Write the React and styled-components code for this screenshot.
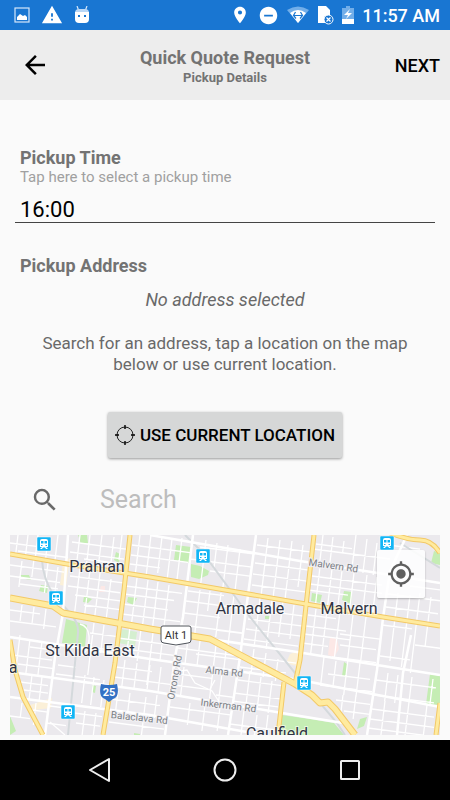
import { useState } from 'react'
import styled, { createGlobalStyle } from 'styled-components'
import {
  MdArrowBack,
  MdMyLocation,
  MdPlace,
  MdRemoveCircle,
  MdSearch,
  MdWarning,
} from 'react-icons/md'

// Side streets of the map: [x, y, end x] and [x, y, end y], the grid is tilted
const crossStreets = [
  [0, 8, 38], [8, 16, 58], [0, 30, 54], [0, 41, 50], [10, 49, 48], [0, 75, 30],
  [0, 86, 46], [20, 112, 44], [2, 120, 42], [8, 129, 44], [10, 147, 38],
  [14, 155, 38], [22, 175, 38], [0, 181, 20], [62, 7, 116], [60, 17, 114],
  [74, 24, 116], [60, 41, 113], [58, 51, 110], [65, 60, 112], [74, 70, 110],
  [80, 98, 106], [78, 112, 104], [48, 130, 66], [46, 139, 90], [72, 147, 102],
  [40, 171, 60], [64, 178, 92], [36, 188, 56], [66, 188, 90], [122, 10, 180],
  [121, 20, 178], [120, 29, 150], [116, 51, 172], [114, 59, 164], [113, 69, 158],
  [112, 79, 170], [108, 103, 166], [107, 113, 164], [106, 132, 142],
  [104, 142, 160], [101, 164, 150], [99, 187, 154], [180, 24, 242],
  [190, 12, 243], [200, 36, 240], [178, 56, 214], [176, 66, 236],
  [174, 78, 210], [172, 90, 234], [206, 95, 232], [168, 113, 226],
  [186, 119, 230], [168, 139, 202], [164, 150, 198], [160, 172, 222],
  [206, 160, 224], [247, 10, 300], [245, 28, 299], [243, 39, 297],
  [242, 50, 297], [240, 74, 294], [238, 84, 293], [236, 94, 291],
  [234, 104, 288], [231, 121, 286], [230, 132, 276], [228, 145, 272],
  [224, 158, 270], [222, 166, 268], [220, 189, 266], [306, 9, 342],
  [303, 14, 380], [302, 41, 372], [300, 49, 372], [298, 55, 338],
  [298, 80, 326], [296, 91, 336], [294, 99, 340], [292, 108, 318],
  [330, 99, 370], [330, 110, 366], [322, 122, 366], [318, 139, 360],
  [310, 150, 362], [326, 165, 360], [334, 176, 360], [366, 145, 426],
  [364, 160, 424], [362, 174, 424], [360, 184, 424], [358, 193, 422],
  [378, 59, 430], [376, 72, 428], [372, 90, 402], [370, 121, 400],
  [400, 51, 430], [405, 110, 430], [378, 10, 410],
]

const sideStreets = [
  [8, 0, 18], [18, 0, 20], [28, 0, 22], [38, 4, 24], [48, 0, 26], [12, 26, 52],
  [24, 24, 42], [38, 28, 58], [48, 32, 66], [12, 70, 86], [24, 72, 88],
  [36, 74, 94], [10, 100, 136], [20, 104, 138], [32, 106, 140], [22, 140, 164],
  [32, 142, 166], [12, 168, 182], [26, 168, 190], [70, 0, 28], [80, 0, 32],
  [92, 0, 32], [104, 2, 35], [112, 0, 25], [70, 33, 78], [80, 35, 80],
  [90, 38, 82], [101, 44, 84], [84, 88, 140], [94, 90, 118], [75, 140, 168],
  [84, 142, 170], [94, 145, 172], [75, 176, 200], [86, 178, 200],
  [130, 0, 38], [141, 0, 40], [152, 2, 38], [162, 4, 44], [172, 3, 45],
  [127, 43, 90], [138, 45, 92], [148, 47, 92], [159, 50, 94], [120, 92, 122],
  [131, 94, 126], [143, 98, 150], [153, 100, 126], [115, 125, 152],
  [127, 128, 154], [140, 130, 154], [151, 132, 158], [108, 156, 176],
  [120, 158, 178], [136, 162, 200], [147, 160, 183], [196, 5, 48],
  [207, 8, 34], [218, 10, 54], [230, 14, 56], [190, 55, 98], [200, 56, 76],
  [211, 58, 102], [224, 60, 114], [178, 104, 128], [190, 106, 130],
  [206, 110, 166], [216, 116, 140], [174, 132, 160], [212, 138, 174],
  [180, 168, 190], [195, 170, 196], [210, 172, 196], [258, 3, 60],
  [270, 5, 62], [282, 6, 64], [293, 10, 52], [250, 63, 112], [262, 65, 114],
  [273, 66, 102], [284, 70, 104], [244, 114, 138], [256, 118, 142],
  [268, 124, 146], [240, 136, 172], [251, 142, 175], [262, 146, 178],
  [234, 175, 200], [247, 180, 200], [258, 180, 198], [313, 0, 26],
  [323, 2, 30], [334, 6, 18], [346, 0, 34], [357, 4, 38], [367, 8, 40],
  [310, 32, 72], [322, 34, 74], [332, 36, 76], [344, 38, 80], [357, 40, 80],
  [367, 42, 82], [306, 74, 118], [317, 76, 120], [330, 76, 124],
  [343, 80, 124], [356, 82, 128], [314, 122, 150], [326, 126, 152],
  [338, 124, 160], [350, 128, 162], [333, 160, 182], [346, 160, 184],
  [388, 58, 126], [400, 60, 132], [410, 58, 138], [421, 62, 112],
  [378, 138, 166], [388, 140, 168], [402, 142, 200], [423, 144, 170],
  [375, 166, 200], [417, 170, 200],
]

const sidePath = [
  ...crossStreets.map(([x, y, end]) => `M${x} ${y}L${end} ${y + (end - x) * 0.13}`),
  ...sideStreets.map(([x, y, end]) => `M${x} ${y}L${x - (end - y) * 0.12} ${end}`),
].join('')

const streets = `M58 0L53 78L45 122L35 200M0 162L140 180L237 197
  M0 137L140 156L290 181L333 188M0 102L140 124L197 132L290 145L430 172
  M140 0L290 26L368 38L430 48M183 0L173 82L165 122L155 200
  M246 0L238 60L230 122L218 200M200 104L287 117L367 130L430 140
  M397 0L380 36L373 83L367 135L357 200M401 100L393 138L387 200`

const mainRoads = [
  'M0 19L57 29L140 42L290 68L373 82L430 91',
  'M120 0L114 55L105 128L93 200',
  'M0 105L5 135L13 162L33 200',
  'M304 0L297 62L290 125L285 149',
  'M274 147L268 200',
  'M380 -2Q398 5 410 5T430 18',
  'M430 168L426 200',
  'M0 63L43 71L53 78L140 94L200 104L285 149L302 160L310 168L318 167L325 174L345 200',
]

const stations = [[34, 9], [46, 63], [58, 177], [193, 21], [294, 148], [377, 8]]

const places = [
  { name: 'Prahran', x: 87, y: 37 },
  { name: 'Armadale', x: 240, y: 79 },
  { name: 'Malvern', x: 339, y: 79 },
  { name: 'St Kilda East', x: 80, y: 121 },
  { name: 'a', x: 3, y: 138 },
  { name: 'Caulfield', x: 267, y: 204 },
]

const roadNames = [
  { name: 'Malvern Rd', x: 323, y: 34, angle: 8 },
  { name: 'Alma Rd', x: 214, y: 140, angle: 6 },
  { name: 'Inkerman Rd', x: 218, y: 174, angle: 7 },
  { name: 'Balaclava Rd', x: 129, y: 186, angle: 6 },
  { name: 'Orrong Rd', x: 168, y: 143, angle: -80 },
]

const ImageIcon = () => (
  <svg width='16' height='16' viewBox='0 0 16 16' aria-hidden='true'>
    <rect x='1' y='1' width='14' height='14' fill='none' stroke='#d5e7fa' strokeWidth='1.2' />
    <path d='M3 13V10L6 7L9 9L11 8L13 10V13Z' fill='#fff' />
  </svg>
)

const DroidIcon = () => (
  <svg width='16' height='18' viewBox='0 0 16 18' aria-hidden='true'>
    <path d='M3 0L4.500 4M13 0L11.500 4' stroke='#d5e7fa' strokeWidth='1.2' />
    <path d='M1 7Q1 3 5 3H11Q15 3 15 7Z' fill='#b9d7f6' />
    <path d='M1 6H15V13Q15 17 11 17H5Q1 17 1 13Z' fill='#fff' />
    <path d='M4 9H6V11H4ZM10 9H12V11H10Z' fill='#1976d2' />
  </svg>
)

const WifiIcon = () => (
  <svg width='22' height='18' viewBox='0 0 22 18' aria-hidden='true'>
    <path d='M0 4Q11 -3 22 4L11 17Z' fill='#72aee9' />
    <path d='M3 7Q11 1 19 7L11 17Z' fill='#fff' />
    <path
      d='M6 9.500H16M8.500 6L6.500 9.500L9 12.500M13.500 6L15.500 9.500L13 12.500'
      fill='none'
      stroke='#1976d2'
      strokeWidth='1.2'
    />
  </svg>
)

const NoSimIcon = () => (
  <svg width='17' height='20' viewBox='0 0 17 20' aria-hidden='true'>
    <path d='M1 1H9L13 5V18H1Z' fill='#fff' />
    <circle cx='11.5' cy='14.5' r='4.5' fill='#1976d2' stroke='#fff' />
    <path d='M9.500 12.500L13.500 16.500M13.500 12.500L9.500 16.500' stroke='#fff' strokeWidth='1.2' />
  </svg>
)

const BatteryIcon = () => (
  <svg width='12' height='18' viewBox='0 0 12 18' aria-hidden='true'>
    <path d='M0 2H4V0H8V2H12V13H0Z' fill='#72aee9' />
    <path d='M0 13H12V18H0Z' fill='#fff' />
    <path d='M8 3L2 9H6L4 13L10 7H6Z' fill='#fff' />
  </svg>
)

const CrosshairIcon = () => (
  <svg width='20' height='20' viewBox='0 0 20 20' aria-hidden='true'>
    <circle cx='10' cy='10' r='8' fill='none' stroke='#222' />
    <path d='M10 0V4M10 16V20M0 10H4M16 10H20' stroke='#000' strokeWidth='1.4' />
  </svg>
)

const StreetMap = () => (
  <MapDrawing viewBox='0 0 430 200' preserveAspectRatio='xMidYMid slice' role='img' aria-label='Map'>
    <rect width='430' height='200' fill='#ebe9ed' />
    <g fill='#c5edb4'>
      <path d='M56 84L77 90L75 112L66 109L52 108Z' />
      <path d='M166 10L181 12L180 28L164 25Z' />
      <path d='M181 29L190 31L199 36L198 40L189 44L181 42Z' />
      <path d='M68 0H77L78 8L71 9ZM106 17L110 19L109 28L104 25Z' />
      <path d='M10 40L19 40L21 45L10 43ZM31 50L38 51L37 58L29 56Z' />
      <path d='M74 61L82 64L78 68L73 67ZM118 62L127 63L123 70L117 67Z' />
      <path d='M82 150L86 151L85 158L82 157ZM255 81H260V84H255Z' />
      <path d='M272 180L300 184L324 188L334 200H268Z' />
      <path d='M302 58L312 60L310 68L301 66ZM334 56L342 57L341 69L332 65Z' />
      <path d='M420 139L430 141V170L416 169ZM424 16L430 18V30L421 28Z' />
      <path d='M334 127L337 129L336 142L332 141ZM350 184L357 182L354 191L347 194Z' />
      <path d='M0 181L6 196L0 200ZM124 198L130 199V200H124Z' />
    </g>
    <path d='M112 94L127 97L125 111L108 108Z' fill='#d5efd0' />
    <path d='M320 102L327 104L329 114L324 122L318 120Z M91 51H95V57H89Z' fill='#fce8e6' />
    <path d='M53 27L60 23L56 51L50 50ZM20 170L42 163L41 173L24 175ZM280 119L290 115V132L276 128Z' fill='#fbf0d8' />
    <path d={sidePath} fill='none' stroke='#fff' strokeWidth='1.3' />
    <path
      d='M163 126L171 136L177 135L185 148L202 156L210 168M205 145L200 154M40 187L55 200M70 89Q78 91 79 101Q80 114 72 120'
      fill='none'
      stroke='#fff'
      strokeWidth='1.3'
    />
    <path
      d='M175 0L193 18L240 82L285 138L327 188L335 200M32 25Q33 43 43 59L60 78Q69 88 68 98L65 128L58 200M390 8L430 33'
      fill='none'
      stroke='#d4d9dc'
      strokeWidth='2'
    />
    <path d={streets} fill='none' stroke='#fff' strokeWidth='2.5' />
    <g fill='none' strokeLinejoin='round'>
      {mainRoads.map((road, i) => (
        <path key={road} d={road} stroke='#f3c967' strokeWidth={i === 7 ? 7 : 5} />
      ))}
      {mainRoads.map((road, i) => (
        <path key={road} d={road} stroke='#ffeb9f' strokeWidth={i === 7 ? 5 : 3} />
      ))}
    </g>
    {stations.map(([x, y]) => (
      <g key={`${x}-${y}`} transform={`translate(${x - 7} ${y - 7})`}>
        <rect width='14' height='14' rx='1' fill='#12b5f5' stroke='#fff' strokeWidth='.5' />
        <path d='M3 4Q3 2 5 2H9Q11 2 11 4V10H9L11 12H9L8 10.500H6L5 12H3L5 10H3Z' fill='#fff' />
        <path d='M4 4H6.500V6.500H4ZM7.500 4H10V6.500H7.500ZM4 8H5.500V9H4ZM8.500 8H10V9H8.500Z' fill='#12b5f5' />
      </g>
    ))}
    <path d='M153 91H179Q181 91 181 93V105Q181 108 178 108L166 110L154 108Q151 108 151 105V93Q151 91 153 91Z' fill='#fff' stroke='#50545b' />
    <ShieldName x='166' y='104'>Alt 1</ShieldName>
    <path d='M91 149Q99 151 107 149Q110 162 103 164L99 167L95 164Q88 162 91 149Z' fill='#3371c5' />
    <ShieldName x='99' y='161' $light>25</ShieldName>
    {places.map(({ name, x, y }) => (
      <PlaceName key={name} x={x} y={y}>{name}</PlaceName>
    ))}
    {roadNames.map(({ name, x, y, angle }) => (
      <RoadName key={name} x={x} y={y} transform={`rotate(${angle} ${x} ${y})`}>{name}</RoadName>
    ))}
  </MapDrawing>
)

export default function App() {
  const [time, setTime] = useState('16:00')
  const [query, setQuery] = useState('')

  return (
    <Screen>
      <GlobalStyle />
      <StatusBar>
        <Notifications>
          <ImageIcon />
          <MdWarning size={22} />
          <DroidIcon />
        </Notifications>
        <SystemStatus>
          <MdPlace size={20} />
          <MdRemoveCircle size={21} />
          <WifiIcon />
          <NoSimIcon />
          <BatteryIcon />
          <Clock>11:57 AM</Clock>
        </SystemStatus>
      </StatusBar>

      <Header>
        <BackButton type='button' aria-label='Back'>
          <MdArrowBack size={30} />
        </BackButton>
        <Heading>
          <h1>Quick Quote Request</h1>
          <p>Pickup Details</p>
        </Heading>
        <NextButton type='button'>NEXT</NextButton>
      </Header>

      <Main>
        <Field>
          <FieldLabel htmlFor='pickup-time'>Pickup Time</FieldLabel>
          <Hint id='time-hint'>Tap here to select a pickup time</Hint>
          <TimeInput
            id='pickup-time'
            aria-describedby='time-hint'
            value={time}
            onChange={(e) => setTime(e.target.value)}
          />
        </Field>

        <Address>
          <SectionTitle>Pickup Address</SectionTitle>
          <Selected>No address selected</Selected>
          <Help>
            Search for an address, tap a location on the map below or use
            current location.
          </Help>
          <LocationButton type='button'>
            <CrosshairIcon />
            USE CURRENT LOCATION
          </LocationButton>
        </Address>

        <SearchRow>
          <MdSearch size={30} />
          <SearchInput
            type='search'
            aria-label='Search'
            placeholder='Search'
            value={query}
            onChange={(e) => setQuery(e.target.value)}
          />
        </SearchRow>

        <MapFrame>
          <StreetMap />
          <LocateButton type='button' aria-label='My location'>
            <MdMyLocation size={28} />
          </LocateButton>
        </MapFrame>
      </Main>

      <NavBar>
        <NavButton type='button' aria-label='Back'>
          <svg width='24' height='26' viewBox='0 0 24 26'>
            <path d='M21 2V24L2 13Z' />
          </svg>
        </NavButton>
        <NavButton type='button' aria-label='Home'>
          <svg width='26' height='26' viewBox='0 0 26 26'>
            <circle cx='13' cy='13' r='10.5' />
          </svg>
        </NavButton>
        <NavButton type='button' aria-label='Recent apps'>
          <svg width='24' height='24' viewBox='0 0 24 24'>
            <rect x='3' y='3' width='18' height='18' rx='.5' />
          </svg>
        </NavButton>
      </NavBar>
    </Screen>
  )
}

const GlobalStyle = createGlobalStyle`
  * {
    box-sizing: border-box;
  }

  body {
    margin: 0;
    background: #fafafa;
    color: #000;
    font-family: Roboto, sans-serif;
  }

  h1, h2, p {
    margin: 0;
  }

  button, input {
    border: 0;
    padding: 0;
    background: none;
    color: inherit;
    font-family: inherit;
  }

  svg {
    flex-shrink: 0;
  }
`

const Screen = styled.div`
  display: flex;
  flex-direction: column;
  min-height: 100vh;
`

const StatusBar = styled.div`
  display: flex;
  align-items: center;
  justify-content: space-between;
  height: 30px;
  padding: 0 10px 0 14px;
  background: #1976d2;
  color: #fff;
`

const Notifications = styled.div`
  display: flex;
  align-items: center;
  gap: 11px;
`

const SystemStatus = styled.div`
  display: flex;
  align-items: center;
  gap: 8px;
`

const Clock = styled.span`
  font-size: 18px;
  font-weight: 500;
`

const Header = styled.header`
  display: grid;
  grid-template-columns: 1fr auto 1fr;
  align-items: center;
  height: 70px;
  padding: 0 10px;
  background: #ededed;
`

const BackButton = styled.button`
  display: flex;
  justify-self: start;
  padding: 10px;
`

const Heading = styled.div`
  padding-top: 3px;
  color: #737373;
  text-align: center;

  h1 {
    font-size: 18px;
    line-height: 22px;
  }

  p {
    font-size: 13px;
    font-weight: 700;
    line-height: 18px;
  }
`

const NextButton = styled.button`
  justify-self: end;
  font-size: 18px;
  font-weight: 500;
`

const Main = styled.main`
  display: flex;
  flex: 1;
  flex-direction: column;
  padding: 48px 10px 5px;
`

const Field = styled.div`
  display: flex;
  flex-direction: column;
  padding: 0 5px;
`

const FieldLabel = styled.label`
  padding: 0 5px;
  color: #737373;
  font-size: 18px;
  font-weight: 700;
  line-height: 20px;
`

const Hint = styled.p`
  padding: 0 5px;
  color: #a0a0a0;
  font-size: 15px;
  line-height: 19px;
`

const TimeInput = styled.input`
  width: 100%;
  height: 36px;
  padding: 10px 5px 0;
  border-bottom: 1px solid #444;
  border-radius: 0;
  outline: 0;
  font-size: 22px;
`

const Address = styled.section`
  display: flex;
  flex-direction: column;
  align-items: center;
  padding: 33px 10px 0;
  color: #696969;
  font-size: 18px;
`

const SectionTitle = styled.h2`
  align-self: flex-start;
  color: #737373;
  font-size: 18px;
  line-height: 20px;
`

const Selected = styled.p`
  margin-top: 12px;
  font-style: italic;
  line-height: 24px;
`

const Help = styled.p`
  max-width: 385px;
  margin-top: 21px;
  font-size: 17px;
  line-height: 21px;
  text-align: center;
`

const LocationButton = styled.button`
  display: flex;
  align-items: center;
  gap: 5px;
  height: 46px;
  margin-top: 37px;
  padding: 0 7px;
  border-radius: 2px;
  background: #d6d7d7;
  box-shadow: 0 1px 3px rgba(0, 0, 0, 0.4);
  color: #000;
  font-size: 17px;
  font-weight: 500;
`

const SearchRow = styled.div`
  display: flex;
  align-items: center;
  gap: 40px;
  height: 77px;
  padding: 6px 10px 0 20px;
  color: #696969;
`

const SearchInput = styled.input`
  flex: 1;
  min-width: 0;
  outline: 0;
  font-size: 25px;

  &::placeholder {
    color: #bdbdbd;
  }
`

const MapFrame = styled.div`
  position: relative;
  display: flex;
  flex: 1;
  min-height: 200px;
`

const MapDrawing = styled.svg`
  width: 100%;
  height: auto;
`

const PlaceName = styled.text`
  fill: #303443;
  stroke: rgba(255, 255, 255, 0.6);
  stroke-width: 2px;
  paint-order: stroke;
  font-size: 16px;
  text-anchor: middle;
`

const RoadName = styled.text`
  fill: #7b8085;
  stroke: #f2f1f4;
  stroke-width: 2px;
  paint-order: stroke;
  font-size: 10px;
  text-anchor: middle;
`

const ShieldName = styled.text`
  fill: ${({ $light }) => ($light ? '#fff' : '#333')};
  font-size: 11px;
  font-weight: ${({ $light }) => ($light ? 700 : 400)};
  text-anchor: middle;
`

const LocateButton = styled.button`
  position: absolute;
  top: 15px;
  right: 15px;
  display: grid;
  place-items: center;
  width: 48px;
  height: 48px;
  border-radius: 2px;
  background: rgba(255, 255, 255, 0.85);
  box-shadow: 0 1px 2px rgba(0, 0, 0, 0.25);
  color: #5f5f5f;
`

const NavBar = styled.nav`
  display: flex;
  align-items: center;
  justify-content: space-around;
  height: 60px;
  padding: 0 38px;
  background: #000;
`

const NavButton = styled.button`
  display: grid;
  place-items: center;
  width: 48px;
  height: 48px;

  svg {
    fill: none;
    stroke: #eee;
    stroke-width: 2px;
    stroke-linejoin: round;
  }
`
